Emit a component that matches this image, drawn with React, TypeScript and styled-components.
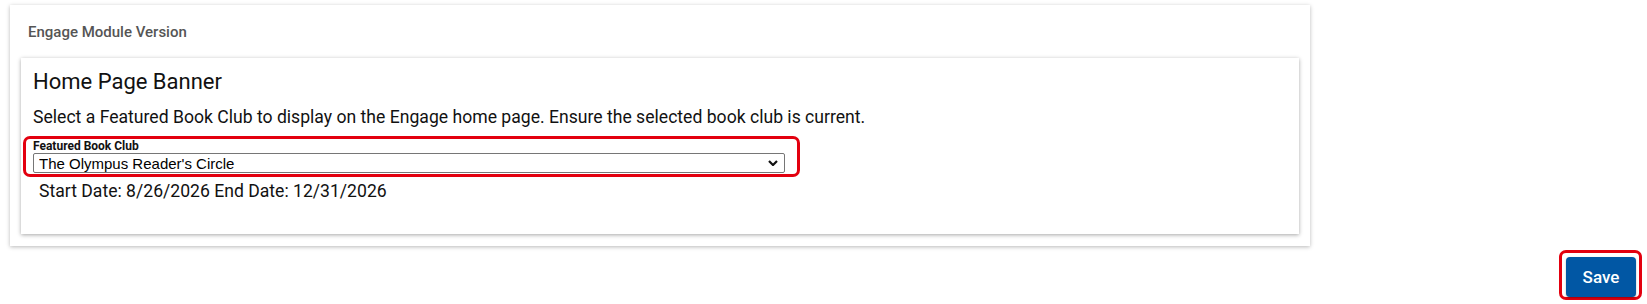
import styled, { createGlobalStyle } from "styled-components"

const GlobalStyle = createGlobalStyle`
    html, body {
        margin: 0;
        padding: 0;
        background: #ffffff;
        font-family: Roboto, "Noto Sans", Arial, sans-serif;
        color: #111111;
    }
`

const App = () => {

    return (

        <Page>

            <GlobalStyle />

            <OuterCard>

                <SectionLabel>Engage Module Version</SectionLabel>

                <InnerCard>

                    <Title>Home Page Banner</Title>

                    <Description>
                        Select a Featured Book Club to display on the Engage home page. Ensure the selected book club is current.
                    </Description>

                    <Highlight>

                        <FieldLabel htmlFor="featured-club">Featured Book Club</FieldLabel>

                        <SelectWrap>
                            <Select id="featured-club" defaultValue="olympus">
                                <option value="olympus">The Olympus Reader's Circle</option>
                            </Select>
                            <Chevron viewBox="0 0 10 6" aria-hidden="true">
                                <path d="M1 1 L5 5 L9 1" fill="none" stroke="#111" strokeWidth="2.2" />
                            </Chevron>
                        </SelectWrap>

                    </Highlight>

                    <Dates>Start Date: 8/26/2026 End Date: 12/31/2026</Dates>

                </InnerCard>

            </OuterCard>

            <Actions>

                <ButtonHighlight>
                    <SaveButton type="button">Save</SaveButton>
                </ButtonHighlight>

            </Actions>

        </Page>

    )

}

const Page = styled.div`
    width: 1647px;
    height: 304px;
    padding: 5px 5px 0 10px;
    box-sizing: border-box;
`

const OuterCard = styled.section`
    width: 1300px;
    box-sizing: border-box;
    padding: 18px 11px 12px 11px;
    background: #fff;
    box-shadow: 0 1px 4px rgba(0, 0, 0, 0.28);
`

const SectionLabel = styled.h3`
    margin: 0 0 17px 7px;
    font-size: 15px;
    font-weight: 500;
    color: #555;
    line-height: 18px;
`

const InnerCard = styled.div`
    padding: 11px 12px 32px 2px;
    background: #fff;
    box-shadow: 0 1px 4px rgba(0, 0, 0, 0.35);
`

const Title = styled.h2`
    margin: 0 0 12px 10px;
    font-size: 22px;
    font-weight: 400;
    line-height: 26px;
`

const Description = styled.p`
    margin: 0 0 8px 10px;
    font-size: 17.6px;
    line-height: 21px;
`

const Highlight = styled.div`
    width: 777px;
    box-sizing: border-box;
    border: 3px solid #e3000f;
    border-radius: 7px;
    padding: 0 12px 1px 7px;
`

const FieldLabel = styled.label`
    display: block;
    font-size: 12px;
    font-weight: 700;
    line-height: 14px;
`

const SelectWrap = styled.div`
    position: relative;
`

const Select = styled.select`
    appearance: none;
    width: 100%;
    height: 20px;
    box-sizing: border-box;
    border: 1px solid #767676;
    border-radius: 2px;
    background: #fff;
    padding: 0 20px 0 5px;
    font-family: "Liberation Sans", Arial, sans-serif;
    font-size: 15px;
    color: #000;
    outline: none;
`

const Chevron = styled.svg`
    position: absolute;
    right: 7px;
    top: 7px;
    width: 10px;
    height: 6px;
    pointer-events: none;
`

const Dates = styled.div`
    margin: 4px 0 0 16px;
    font-size: 17.6px;
    line-height: 21px;
`

const Actions = styled.div`
    display: flex;
    justify-content: flex-end;
    margin-top: 4px;
`

const ButtonHighlight = styled.div`
    padding: 4px 3px 0 4px;
    border: 3px solid #e3000f;
    border-radius: 7px;
    display: flex;
`

const SaveButton = styled.button`
    width: 70px;
    height: 40px;
    border: none;
    border-radius: 4px;
    background: #0157a4;
    color: #fff;
    font-family: Roboto, Arial, sans-serif;
    font-size: 17px;
    font-weight: 500;
    box-shadow: 0 1px 2px rgba(0, 0, 0, 0.3);
`

export default App
